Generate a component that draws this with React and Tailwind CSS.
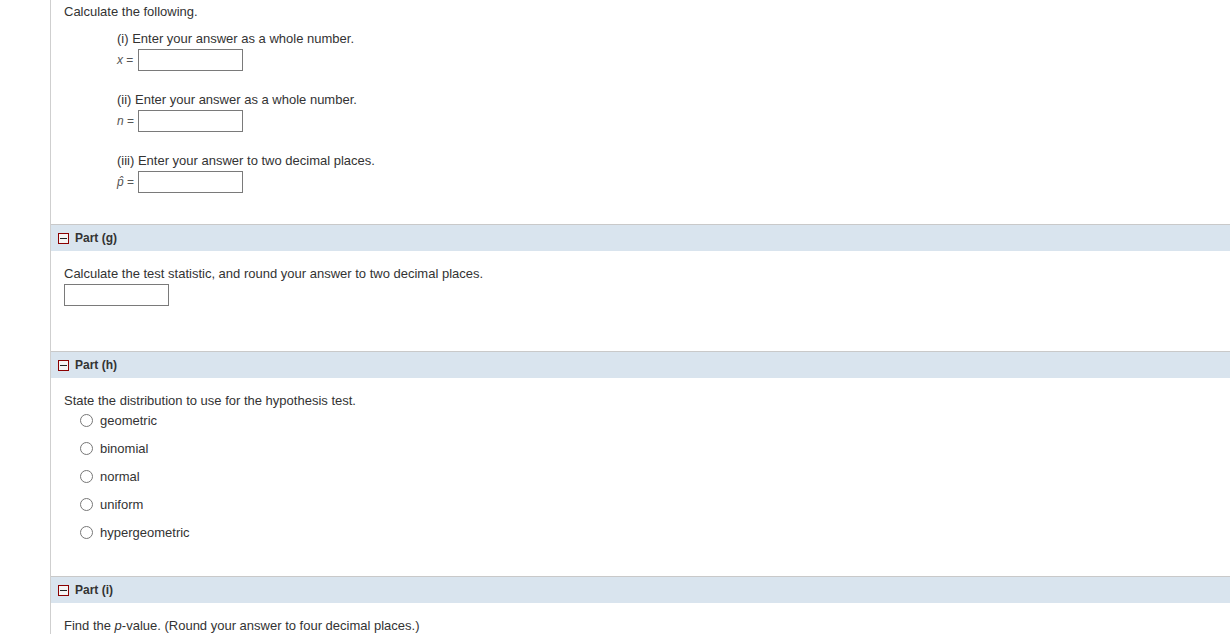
import React from "react";

function Collapse() {
  return (
    <span className="w-[11px] h-[11px] border border-[#8b0000] flex items-center justify-center shrink-0 bg-[#f4f4f4]">
      <span className="w-[7px] h-[1px] bg-[#222]" />
    </span>
  );
}

function Header({ label }) {
  return (
    <div className="h-[27px] border-t border-[#c9c9c9] bg-[#d9e4ee] flex items-center pl-[7px] gap-[6px]">
      <Collapse />
      <span className="text-[12px] font-bold text-[#333] leading-none">{label}</span>
    </div>
  );
}

function Field({ children }) {
  return (
    <div className="flex items-center h-[22px] mt-[3px]">
      <span className="w-[21px] text-[#555] text-[12px] whitespace-nowrap">{children}</span>
      <span className="w-[105px] h-[22px] border border-[#7a7a7a] bg-white" />
    </div>
  );
}

function Block({ label, sym, first }) {
  return (
    <div className={first ? "" : "mt-[21px]"}>
      <div className="leading-[15px]">{label}</div>
      <Field>{sym}</Field>
    </div>
  );
}

function Radio({ label }) {
  return (
    <div className="h-[28px] flex items-center pl-[16px] gap-[7px]">
      <span className="w-[13px] h-[13px] rounded-full border border-[#777] bg-white" />
      <span className="leading-[15px]">{label}</span>
    </div>
  );
}

export default function App() {
  return (
    <div className="flex w-[1230px] h-[634px] overflow-hidden bg-white font-['Liberation_Sans',Arial,sans-serif] text-[13px] text-[#333]">
      <div className="w-[50px] shrink-0" />
      <div className="flex-1 border-l border-[#cfcfcf] flex flex-col">
        <div className="pl-[13px] pt-[4px] leading-[15px]">Calculate the following.</div>
        <div className="pl-[66px] mt-[12px]">
          <Block first label="(i) Enter your answer as a whole number." sym={<><i>x</i> =</>} />
          <Block label="(ii) Enter your answer as a whole number." sym={<><i>n</i> =</>} />
          <Block label="(iii) Enter your answer to two decimal places." sym={<><i>p̂</i> =</>} />
        </div>
        <div className="mt-[31px]">
          <Header label="Part (g)" />
        </div>
        <div className="pl-[13px] pt-[15px]">
          <div className="leading-[15px]">Calculate the test statistic, and round your answer to two decimal places.</div>
          <div className="w-[105px] h-[22px] border border-[#7a7a7a] mt-[3px]" />
        </div>
        <div className="mt-[45px]">
          <Header label="Part (h)" />
        </div>
        <div className="pl-[13px] pt-[16px]">
          <div className="leading-[14px]">State the distribution to use for the hypothesis test.</div>
          <div className="-mt-[2px]">
            <Radio label="geometric" />
            <Radio label="binomial" />
            <Radio label="normal" />
            <Radio label="uniform" />
            <Radio label="hypergeometric" />
          </div>
        </div>
        <div className="mt-[30px]">
          <Header label="Part (i)" />
        </div>
        <div className="pl-[13px] pt-[15px] leading-[15px]">
          Find the <i>p</i>-value. (Round your answer to four decimal places.)
        </div>
      </div>
    </div>
  );
}
